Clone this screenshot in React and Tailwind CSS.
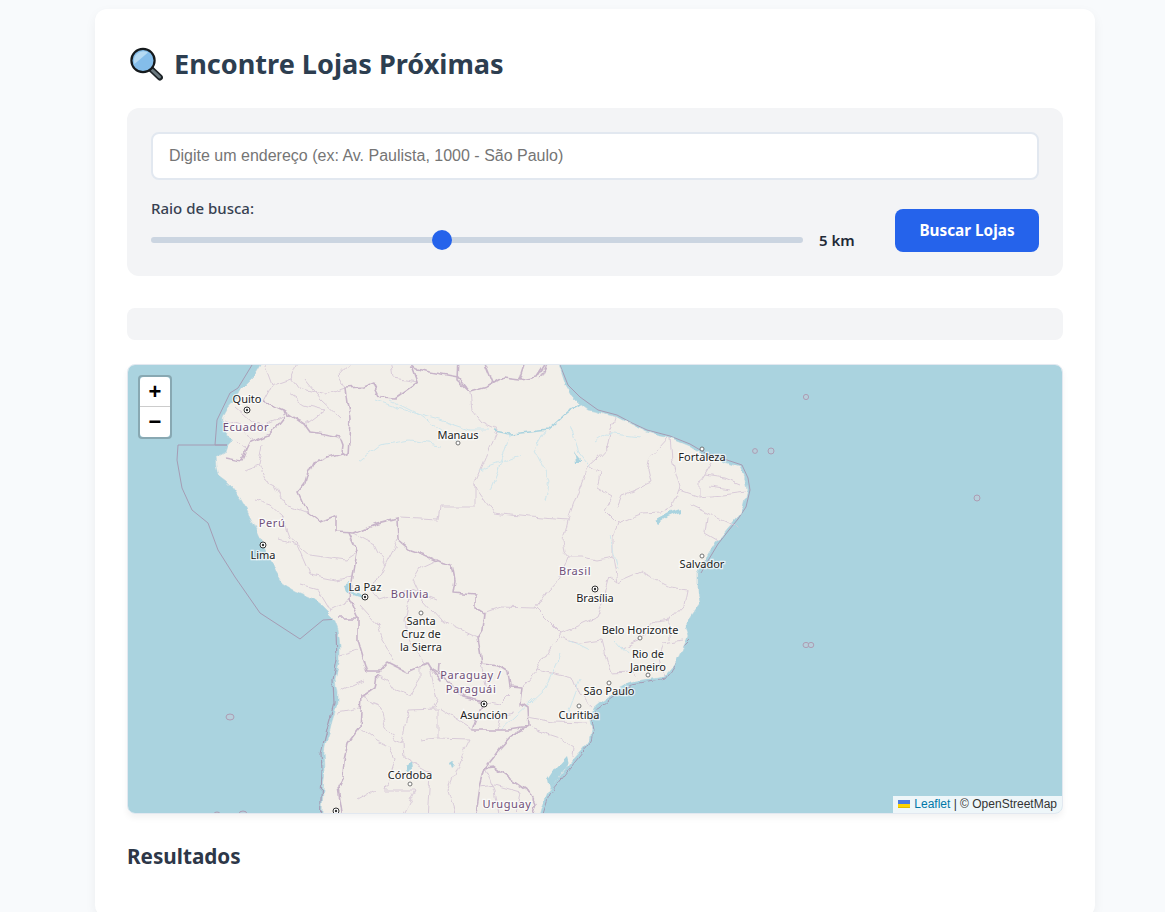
const FS = '"Noto Sans", "Open Sans", sans-serif';
const coast = "258,350 260,365 253,377 240,390 235,400 228,408 223,417 222,430 232,438 228,446 226,452 215,458 216,466 218,475 226,481 233,488 240,498 247,510 252,520 257,530 264,546 270,560 276,572 283,583 296,591 310,597 322,606 333,617 338,630 340,645 340,660 337,672 335,680 337,692 337,703 333,717 330,730 326,742 324,753 325,770 323,790 322,813 320,830 536,830 540,813 543,803 547,793 560,776 573,760 582,750 590,740 592,730 590,720 593,708 601,701 610,695 620,688 630,683 647,680 663,677 671,668 677,660 683,648 688,637 685,625 690,617 695,610 700,603 698,590 698,573 702,565 707,557 716,542 727,528 736,518 743,507 747,490 745,478 740,467 727,463 715,460 707,457 690,446 670,438 660,436 647,432 632,425 617,417 607,415 598,412 588,410 580,404 573,397 566,385 560,367 558,350";
const national = [
  "263,402 272,405 283,410 285,417 277,427 267,435 250,442 246,450 242,460 235,459 225,457",
  "283,410 295,418 305,425 310,432 325,434 340,437 343,445 342,453 328,457 313,463 308,473 305,483 298,492 303,503 308,513 320,522 337,515 337,532 353,533 365,528 377,523 397,518 398,540 410,550 425,555 440,562 452,565 455,580 453,593 475,595 475,607 485,613 483,630 478,638 480,650 482,663 497,665 508,672 510,687 522,688 520,703 527,708 528,727 510,737 500,748 493,758 485,768 480,787 475,820",
  "350,418 347,403 345,388 363,387 373,383 380,397 395,398 418,382 410,360",
  "350,418 349,440 348,457 342,453",
  "410,367 425,371 458,377 470,392 487,387 503,378 520,380 537,377 548,360",
  "458,358 457,380 470,392",
  "483,358 493,383", "527,358 520,380", "550,358 540,380",
  "485,768 493,767 507,777 530,793 535,803 530,820",
  "348,533 357,552 353,577 350,600 358,618 358,640 368,673 377,673 387,662 407,672 427,663 430,668 447,680 463,697 483,702 473,730 497,730 510,730 528,727",
  "377,675 375,688 362,697 360,727 348,743 344,760 343,777 338,787 343,820",
  "340,618 358,618",
  "430,668 440,680 441,662",
];
const states = [
  "470,393 472,410 483,423 498,430 487,455 475,483 478,492 493,513 530,517 568,520 563,540 565,553 568,557 582,557 597,560 613,557 617,582 640,572 670,587 687,590 684,605 670,620 670,640",
  "475,483 475,507 440,507 438,520 400,518",
  "615,417 610,432 607,447 597,458 587,467 580,487 568,520",
  "590,467 600,473 597,488 612,497 605,510 618,523 613,537 613,557",
  "618,523 643,513 660,512 673,507 678,492 680,487 672,460 670,438",
  "617,507 622,495 635,490 650,483 647,470 650,457 658,448 667,438",
  "680,490 700,497 722,495 745,492",
  "700,497 700,483 712,463", "705,475 725,478 740,484", "710,487 730,490",
  "690,505 707,513 722,520 737,527",
  "707,517 705,533 717,540",
  "617,582 610,577 603,603 597,617 575,627 560,633 535,608 548,590 560,577 568,557",
  "535,608 500,607 483,613",
  "560,633 537,670 523,687",
  "537,670 573,678 580,695 593,707",
  "528,717 553,722 587,723",
  "530,728 560,738 573,747 572,757",
  "560,637 580,643 602,640 607,660 612,673 632,672 638,677",
  "663,677 658,660 663,643 683,640",
  "670,620 655,622 640,640 622,648",
  "246,450 235,440", "225,420 240,425 250,440", "235,407 250,420 262,425 283,417",
  "262,358 272,385 263,402", "300,358 292,378 300,388 325,395 345,388", "355,358 338,376 345,388",
  "305,380 321,400 340,418", "272,385 292,378", "290,395 305,405 325,410",
  "305,425 325,410", "390,358 393,378 418,382",
  "258,465 265,480 275,485 285,505 300,510 308,513", "245,470 258,465 262,445",
  "255,500 270,505 282,516 290,538 310,555 345,560 357,552",
  "280,540 297,545 310,575 335,580 353,577", "300,585 318,590 330,610 350,600",
  "398,540 385,565 372,590 380,600 412,590 437,600", "353,533 375,545 385,565",
  "437,560 420,568 413,580 422,600 440,620 478,638", "412,590 405,620 408,640 425,665",
  "360,605 378,625 383,640 395,660", "340,655 358,650", "340,690 362,680", "337,712 360,708",
  "377,675 388,680 395,690 410,695 420,680 420,665",
  "362,697 380,704 385,725 395,740 402,743",
  "408,710 437,709 437,738 470,739 462,755 448,790 457,820",
  "408,710 402,743 403,758 430,773 427,820",
  "360,727 378,742 390,748 395,760 385,790 415,790 400,820",
  "375,790 357,800", "420,740 437,738",
  "430,668 437,700 432,709", "473,730 440,709",
  "485,702 500,705 510,695", "497,730 500,715 513,712", "482,663 488,690",
  "480,787 495,785 520,792", "485,768 495,790 500,820", "520,792 515,820",
];
const rivers = [
  "375,400 410,412 440,420 470,430 490,430", "510,434 498,470 490,490", "545,432 535,450 550,480 545,500", "570,425 580,455 590,468",
  "390,400 420,415 458,443", "360,460 380,445 410,440 440,445", "593,441 605,433 640,437",
  "615,640 628,655", "567,715 580,680", "500,730 545,688 560,655", "570,640 590,650", "480,470 520,455", "610,535 618,570",
];
const water = [
  "344,585 350,583 350,592 358,594 366,600 356,597 346,593", "574,450 578,458 582,462 576,462",
  "550,790 560,775 568,765 566,757 556,768 548,780",
  "405,766 412,762 413,769 406,771", "452,768 450,762 453,760 455,765",
  "655,520 668,513 680,509 680,512 668,517 658,524",
];
const Label = ({ x, y, c, purple }) => (
  <text x={x} y={y} textAnchor="middle" fontFamily={FS} fontSize={11} fill={purple ? "#6f4f78" : "#222"} stroke="#fff" strokeOpacity="0.7" strokeWidth="2.5" paintOrder="stroke" letterSpacing={purple ? 0.6 : 0}>{c}</text>
);
const labels = [
  [247,403,"Quito"],[246,431,"Ecuador",1],[458,439,"Manaus"],[702,461,"Fortaleza"],[272,527,"Perú",1],[263,559,"Lima"],
  [365,591,"La Paz"],[410,598,"Bolivia",1],[421,625,"Santa"],[421,638,"Cruz de"],[421,651,"la Sierra"],[575,575,"Brasil",1],
  [595,602,"Brasília"],[702,568,"Salvador"],[640,634,"Belo Horizonte"],[648,658,"Rio de"],[648,671,"Janeiro"],[609,695,"São Paulo"],
  [579,719,"Curitiba"],[471,679,"Paraguay /",1],[471,693,"Paraguái",1],[484,719,"Asunción"],[410,779,"Córdoba"],[507,808,"Uruguay",1],
];
const capitals = [[247,410],[263,545],[365,597],[595,589],[484,704],[336,811]];
const towns = [[458,443],[702,449],[421,613],[702,556],[640,638],[648,675],[609,683],[579,706],[410,784]];
const islands = [[806,397,2.6,2.6],[755,451,2.4,2.4],[771,451,3,3],[977,498,3,3],[806,645,3,2.6],[811,645,2.8,2.6],[230,717,4,3],[217,814,3,2],[243,814,4,3]];

function MapArt() {
  return (
    <svg viewBox="128 365 934 448" className="block w-full h-full">
      <defs>
        <filter id="wig" x="-5%" y="-5%" width="110%" height="110%" filterUnits="objectBoundingBox">
          <feTurbulence type="fractalNoise" baseFrequency="0.09" numOctaves="2" seed="4" result="n" />
          <feDisplacementMap in="SourceGraphic" in2="n" scale="7" xChannelSelector="R" yChannelSelector="G" />
        </filter>
      </defs>
      <rect x="128" y="365" width="934" height="448" fill="#aad3df" />
      <polyline points="252,365 238,388 230,393 217,420 215,445 227,445 178,445 177,460 182,488 192,510 208,523 218,550 235,577 260,613 300,639 323,620 340,619" fill="none" stroke="#a59cb4" strokeWidth="1" />
      <g filter="url(#wig)">
        <polyline points="336,632 337,660 333,680 334,703 327,730 321,753 322,770 320,830" fill="none" stroke="#a59cb4" strokeWidth="1.2" />
        <polyline points="690,640 680,650 673,668 665,679 632,685 612,697 595,710 592,720 594,730 592,741 575,762 549,795 538,830" fill="none" stroke="#a59cb4" strokeWidth="1" />
      </g>
      <polyline points="560,365 568,385 580,397 598,410 617,415 632,423 647,430 670,436 690,444 707,454 727,460 742,465 748,478 750,490 746,507 738,519 729,530 718,544 709,559 701,573" fill="none" stroke="#a59cb4" strokeWidth="1" />
      <g filter="url(#wig)">
        <polygon points={coast} fill="#f2efe9" stroke="#b5d5df" strokeWidth="0.6" />
        {states.map((p, i) => <polyline key={i} points={p} fill="none" stroke="#d9cbd9" strokeWidth="1" strokeLinejoin="round" />)}
        {rivers.map((p, i) => <polyline key={i} points={p} fill="none" stroke="#cfe6ec" strokeWidth="1" />)}
        <polyline points="495,431 510,434 530,432 548,430 568,412 580,405" fill="none" stroke="#aad3df" strokeWidth="1.6" />
        {water.map((p, i) => <polygon key={i} points={p} fill="#aad3df" />)}
        {national.map((p, i) => <polyline key={i} points={p} fill="none" stroke="#c7b4c9" strokeWidth="1.6" strokeLinejoin="round" />)}
      </g>
      {islands.map(([x, y, rx, ry], i) => <ellipse key={i} cx={x} cy={y} rx={rx} ry={ry} fill="#b6cfdb" stroke="#ac9db4" strokeWidth="1" />)}
      {capitals.map(([x, y], i) => <g key={i}><circle cx={x} cy={y} r="3" fill="#fff" stroke="#333" strokeWidth="1" /><circle cx={x} cy={y} r="1.2" fill="#333" /></g>)}
      {towns.map(([x, y], i) => <circle key={i} cx={x} cy={y} r="2" fill="#fff" stroke="#666" strokeWidth="0.9" />)}
      {labels.map(([x, y, c, p], i) => <Label key={i} x={x} y={y} c={c} purple={p} />)}
    </svg>
  );
}

function Magnifier() {
  return (
    <svg viewBox="0 0 34 34" className="w-[34px] h-[34px] shrink-0">
      <line x1="21.5" y1="21.5" x2="31" y2="30.5" stroke="#1c2226" strokeWidth="6" strokeLinecap="round" />
      <line x1="23" y1="23" x2="30.5" y2="30" stroke="#6c7a80" strokeWidth="3" strokeLinecap="round" />
      <circle cx="14" cy="13.5" r="11.6" fill="#84bdea" stroke="#151a1d" strokeWidth="2.2" />
      <path d="M5.5 17 A9.5 9.5 0 0 1 19 5.5 Z" fill="#b5daf3" />
    </svg>
  );
}

export default function App() {
  return (
    <div className="min-h-[912px] h-[912px] overflow-hidden bg-[#f8fafc] pt-[9px] pl-[95px]" style={{ fontFamily: FS }}>
      <div className="w-[1000px] bg-white rounded-xl shadow-[0_4px_12px_rgba(0,0,0,0.05)] p-8 pb-12">
        <h1 className="flex items-center gap-[11px] h-[44px] mt-[1px] text-[27.1px] font-bold leading-none text-[#2d3e50] pl-[2px]">
          <Magnifier />
          <span>Encontre Lojas Próximas</span>
        </h1>
        <div className="mt-[22px] bg-[#f3f4f6] rounded-xl p-6 h-[168px]">
          <input
            readOnly
            placeholder="Digite um endereço (ex: Av. Paulista, 1000 - São Paulo)"
            className="block w-full h-12 rounded-lg border-2 border-[#e2e8f0] bg-white px-4 text-base placeholder:text-[#757575] outline-none"
            style={{ fontFamily: '"Liberation Sans", Arial, sans-serif' }}
          />
          <div className="flex items-end gap-10 mt-[17px]">
            <div className="flex-1 min-w-0">
              <label className="block text-[15px] font-medium text-[#374151] leading-[22px]">Raio de busca:</label>
              <div className="flex items-center gap-4 mt-[8px] h-[26px]">
                <input
                  type="range" min="1" max="10" defaultValue="5"
                  className="flex-1 min-w-0 h-1.5 appearance-none rounded bg-[#cbd5e1] [&::-webkit-slider-thumb]:appearance-none [&::-webkit-slider-thumb]:w-5 [&::-webkit-slider-thumb]:h-5 [&::-webkit-slider-thumb]:rounded-full [&::-webkit-slider-thumb]:bg-[#2563eb]"
                />
                <span className="w-[36px] text-[15px] font-semibold text-[#1f2937] whitespace-nowrap">5 km</span>
              </div>
            </div>
            <button className="w-[144px] h-[43px] mb-[1px] rounded-lg bg-[#2563eb] text-white text-[15.3px] font-bold">Buscar Lojas</button>
          </div>
        </div>
        <div className="mt-8 h-8 rounded-lg bg-[#f3f4f6]"></div>
        <div className="relative mt-6 h-[450px] rounded-lg border border-[#e2e8f0] overflow-hidden shadow-[0_4px_6px_rgba(0,0,0,0.05)]">
          <MapArt />
          <div className="absolute left-[10px] top-[10px] w-[34px] rounded border-2 border-[rgba(0,0,0,0.2)] bg-clip-padding">
            <div className="h-[30px] rounded-t-sm bg-white border-b border-[#ccc] flex items-center justify-center text-[22px] font-bold text-black leading-none" style={{ fontFamily: '"Liberation Sans", sans-serif' }}>+</div>
            <div className="h-[30px] rounded-b-sm bg-white flex items-center justify-center text-[22px] font-bold text-black leading-none" style={{ fontFamily: '"Liberation Sans", sans-serif' }}>−</div>
          </div>
          <div className="absolute right-0 bottom-0 h-[17px] flex items-center gap-[4px] bg-[rgba(255,255,255,0.8)] pl-[5px] pr-[5px] pb-[1px] text-[12px] leading-none text-[#333]" style={{ fontFamily: '"Liberation Sans", sans-serif' }}>
            <svg viewBox="0 0 12 8" className="w-3 h-2"><rect width="12" height="4" fill="#4C7BE1" /><rect y="4" width="12" height="3" fill="#FFD500" /><rect y="7" width="12" height="1" fill="#E0BC00" /></svg>
            <span><span className="text-[#0078a8]">Leaflet</span> | © OpenStreetMap</span>
          </div>
        </div>
        <h2 className="mt-[29px] text-[20.7px] font-bold leading-[26px] text-[#2d3748]">Resultados</h2>
      </div>
    </div>
  );
}
